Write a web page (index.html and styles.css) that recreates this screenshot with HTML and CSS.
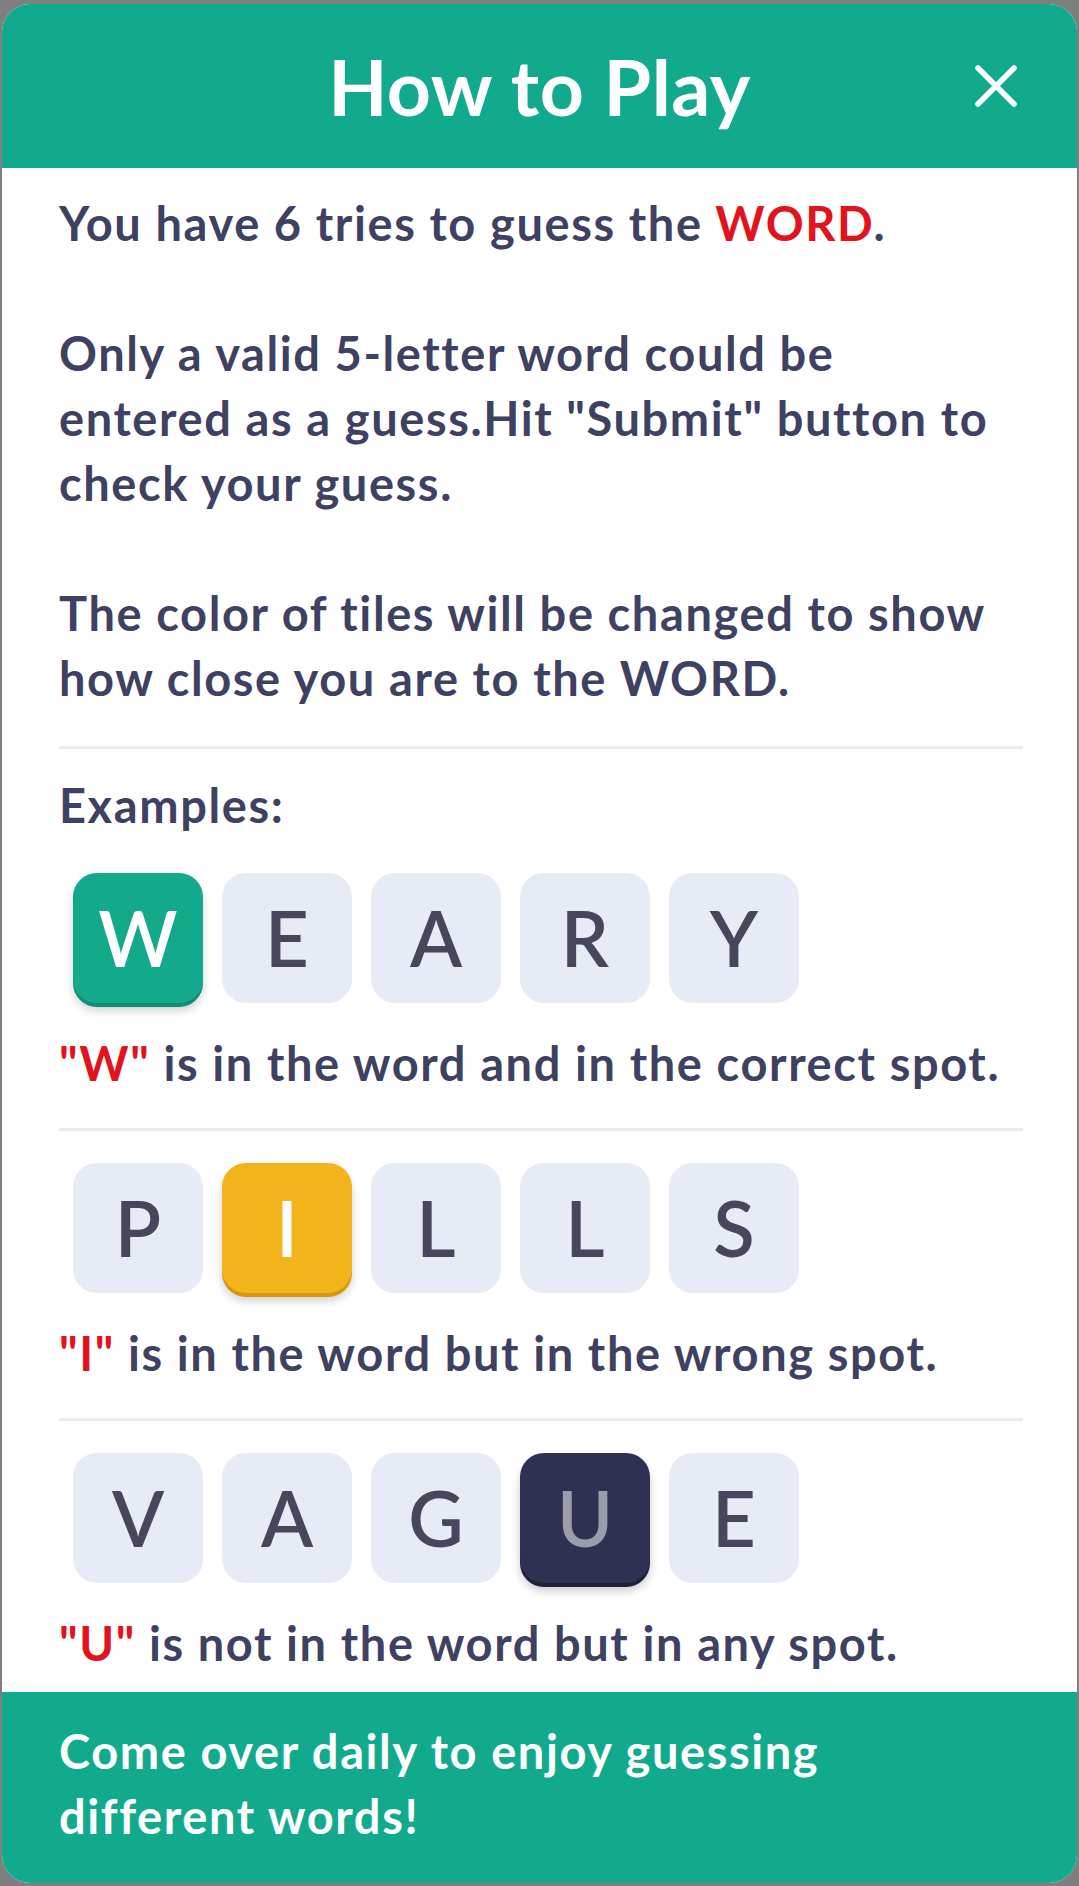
FILE: index.html
```html
<!DOCTYPE html>
<html lang="en">
<head>
<meta charset="utf-8">
<title>How to Play</title>
<link rel="stylesheet" href="styles.css">
</head>
<body>
<div class="modal">
  <header class="modal-header">
    <span></span>
    <h1 class="title">How to Play</h1>
    <button class="close" aria-label="Close">
      <svg viewBox="0 0 44 44" width="44" height="44"><path d="M4 4L40 40M40 4L4 40" stroke="#fff" stroke-width="5.5" stroke-linecap="round" fill="none"/></svg>
    </button>
  </header>
  <main class="content">
    <p class="intro">You have 6 tries to guess the <span class="red">WORD</span>.<br><br>Only a valid 5-letter word could be entered as a guess.Hit "Submit" button to check your guess.<br><br>The color of tiles will be changed to show how close you are to the WORD.</p>
    <hr class="divider first">
    <p class="examples">Examples:</p>
    <div class="row">
      <div class="tile green">W</div><div class="tile">E</div><div class="tile">A</div><div class="tile">R</div><div class="tile">Y</div>
    </div>
    <p class="caption"><span class="red">"W"</span> is in the word and in the correct spot.</p>
    <hr class="divider">
    <div class="row">
      <div class="tile">P</div><div class="tile yellow">I</div><div class="tile">L</div><div class="tile">L</div><div class="tile">S</div>
    </div>
    <p class="caption"><span class="red">"I"</span> is in the word but in the wrong spot.</p>
    <hr class="divider">
    <div class="row">
      <div class="tile">V</div><div class="tile">A</div><div class="tile">G</div><div class="tile dark">U</div><div class="tile">E</div>
    </div>
    <p class="caption"><span class="red">"U"</span> is not in the word but in any spot.</p>
  </main>
  <footer class="modal-footer">Come over daily to enjoy guessing different words!</footer>
</div>
</body>
</html>
```
FILE: styles.css
```css
html, body {
  margin: 0;
  padding: 0;
  background: #7f7f7f;
}
body {
  padding: 4px 2px 3px 2px;
  font-family: Lato, "Noto Sans", sans-serif;
}
.modal {
  width: 1075px;
  height: 1879px;
  background: #ffffff;
  border-radius: 28px;
  overflow: hidden;
  display: flex;
  flex-direction: column;
}
.modal-header {
  height: 164px;
  flex: none;
  background: #12aa8c;
  display: grid;
  grid-template-columns: 1fr auto 1fr;
  align-items: center;
}
.title {
  margin: 0;
  color: #ffffff;
  font-size: 77px;
  font-weight: 700;
  line-height: 1;
  letter-spacing: 0.5px;
}
.close {
  justify-self: end;
  margin-right: 59px;
  padding: 0;
  border: 0;
  background: none;
  width: 44px;
  height: 44px;
  display: flex;
}
.content {
  flex: 1;
  padding: 23px 54px 0 57px;
  color: #3f4163;
  font-size: 47px;
  font-weight: 700;
  line-height: 65px;
  letter-spacing: 1.6px;
}
.content p {
  margin: 0;
}
.content .intro {
  padding-right: 18px;
}
.red {
  color: #e3121c;
}
.divider {
  border: 0;
  height: 3px;
  background: #ebebef;
  margin: 32px 0 0 0;
}
.divider.first {
  margin-top: 35px;
}
.examples {
  margin-top: 24px !important;
}
.row {
  display: flex;
  gap: 19px;
  padding-left: 14px;
  margin-top: 33px;
  letter-spacing: 0;
}
.divider + .row {
  margin-top: 32px;
}
.examples + .row {
  margin-top: 35px;
}
.tile {
  width: 130px;
  height: 130px;
  border-radius: 24px;
  background: #e6ebf6;
  color: #46475c;
  font-size: 76px;
  font-weight: 600;
  display: flex;
  align-items: center;
  justify-content: center;
  line-height: 1;
}
.tile.green {
  background: #13a98b;
  color: #ffffff;
  box-shadow: 0 4px 0 #0e8f75, 0 8px 10px rgba(0,0,0,0.18);
}
.tile.yellow {
  background: #f3b31b;
  color: #ffffff;
  box-shadow: 0 4px 0 #d6970c, 0 8px 10px rgba(0,0,0,0.18);
}
.tile.dark {
  background: #2f3152;
  color: #9c9dab;
  box-shadow: 0 4px 0 #1e2038, 0 8px 10px rgba(0,0,0,0.2);
}
.caption {
  margin-top: 28px !important;
}
.modal-footer {
  flex: none;
  height: 191px;
  box-sizing: border-box;
  background: #12aa8c;
  color: #ffffff;
  font-size: 47px;
  font-weight: 700;
  line-height: 65px;
  letter-spacing: 1.6px;
  padding: 27px 54px 0 57px;
}
```
